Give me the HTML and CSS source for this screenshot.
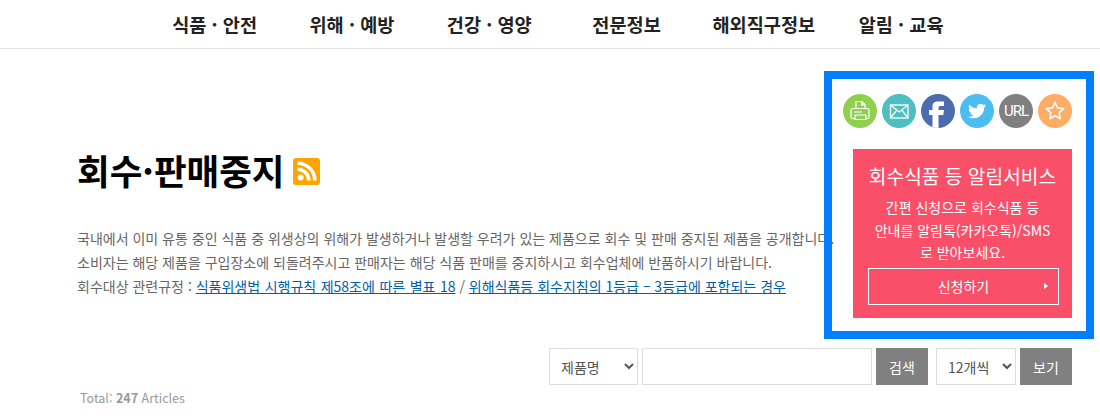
FILE: index.html
```html
<!DOCTYPE html>
<html lang="ko">
<head>
<meta charset="utf-8">
<title>회수·판매중지</title>
<link rel="stylesheet" href="styles.css">
</head>
<body>
<header class="top">
  <nav class="gnb">
    <a>식품 · 안전</a>
    <a>위해 · 예방</a>
    <a>건강 · 영양</a>
    <a>전문정보</a>
    <a>해외직구정보</a>
    <a>알림 · 교육</a>
  </nav>
</header>
<main class="content">
  <h1 class="title">회수·판매중지
    <svg class="rss" viewBox="0 0 27 27" aria-hidden="true">
      <rect width="27" height="27" rx="3" fill="#ffa500"/>
      <circle cx="7.6" cy="19.6" r="3" fill="#fff"/>
      <path d="M4.6 11.2a11.2 11.2 0 0 1 11.2 11.2M4.6 5.2a17.2 17.2 0 0 1 17.2 17.2" fill="none" stroke="#fff" stroke-width="3.6"/>
    </svg>
  </h1>
  <div class="intro">
    <p>국내에서 이미 유통 중인 식품 중 위생상의 위해가 발생하거나 발생할 우려가 있는 제품으로 회수 및 판매 중지된 제품을 공개합니다.</p>
    <p>소비자는 해당 제품을 구입장소에 되돌려주시고 판매자는 해당 식품 판매를 중지하시고 회수업체에 반품하시기 바랍니다.</p>
    <p>회수대상 관련규정 : <a class="lnk lnk-wide">식품위생법 시행규칙 제58조에 따른 별표 18</a> / <a class="lnk">위해식품등 회수지침의 1등급 – 3등급에 포함되는 경우</a></p>
  </div>
  <form class="search">
    <select class="fld sel-a"><option>제품명</option></select>
    <input class="fld txt" type="text">
    <button class="btn btn-search" type="button">검색</button>
    <select class="fld sel-b"><option>12개씩</option></select>
    <button class="btn" type="button">보기</button>
  </form>
  <p class="total">Total: <b>247</b> Articles</p>
</main>
<aside class="panel">
  <div class="shares">
    <span class="ico c-print">
      <svg viewBox="0 0 34 34" aria-hidden="true"><g fill="none" stroke="#fff" stroke-width="1.2"><path d="M13 14.500V7.500h6l3 3v4"/><path fill="#fff" d="M18.500 7.500V11H22"/><path d="M12 24.500H9.500A1.500 1.500 0 0 1 8 23v-6.500a2 2 0 0 1 2-2h14a2 2 0 0 1 2 2V23a1.500 1.500 0 0 1-1.500 1.500H23"/><path d="M12 21h11v4.500H12z"/><path d="M11 18h8"/></g></svg>
    </span>
    <span class="ico c-mail">
      <svg viewBox="0 0 34 34" aria-hidden="true"><g fill="none" stroke="#fff" stroke-width="1.300"><rect x="8.500" y="11" width="17.500" height="13"/><path d="M8.500 11l8.750 7 8.750-7M8.500 24l6-7.500M26 24l-6-7.500"/></g></svg>
    </span>
    <span class="ico c-fb">
      <svg viewBox="0 0 34 34" aria-hidden="true"><path fill="#fff" d="M11.500 34V21H8v-5h3.500v-3.500c0-3.500 2-5 5.500-5h6v4.500h-3c-1.500 0-2.500.5-2.500 2V16H23l-.7 5h-4.800v13z"/></svg>
    </span>
    <span class="ico c-tw">
      <svg viewBox="-10.700 -10.700 45.300 45.300" aria-hidden="true"><path fill="#fff" d="M23.953 4.57a10 10 0 01-2.825.775 4.958 4.958 0 002.163-2.723c-.951.555-2.005.959-3.127 1.184a4.92 4.92 0 00-8.384 4.482C7.69 8.095 4.067 6.13 1.64 3.162a4.822 4.822 0 00-.666 2.475c0 1.71.87 3.213 2.188 4.096a4.904 4.904 0 01-2.228-.616v.06a4.923 4.923 0 003.946 4.827 4.996 4.996 0 01-2.212.085 4.936 4.936 0 004.604 3.417 9.867 9.867 0 01-6.102 2.105c-.39 0-.779-.023-1.17-.067a13.995 13.995 0 007.557 2.209c9.053 0 13.998-7.496 13.998-13.985 0-.21 0-.42-.015-.63A9.935 9.935 0 0024 4.59z"/></svg>
    </span>
    <span class="ico c-url">URL</span>
    <span class="ico c-star">
      <svg viewBox="0 0 34 34" aria-hidden="true"><path fill="none" stroke="#fff" stroke-width="1.700" stroke-linejoin="round" d="M17 8.500l2.600 5.400 5.900.8-4.300 4.100 1.100 5.900-5.300-2.900-5.300 2.900 1.100-5.900-4.300-4.100 5.900-.8z"/></svg>
    </span>
  </div>
  <section class="alert">
    <h2 class="alert-title">회수식품 등 알림서비스</h2>
    <p class="alert-text">간편 신청으로 회수식품 등<br>안내를 알림톡(카카오톡)/SMS<br>로 받아보세요.</p>
    <a class="alert-btn">신청하기<i class="arrow"></i></a>
  </section>
</aside>
</body>
</html>
```
FILE: styles.css
```css
* { box-sizing: border-box; }
html, body { height: 100%; }
body {
  margin: 0;
  overflow: hidden;
  background: #fff;
  font-family: "Noto Sans CJK KR", "Noto Sans", sans-serif;
  color: #666;
}
p, h1, h2 { margin: 0; }

.top {
  height: 49px;
  border-bottom: 1px solid #e8e8e8;
  padding-left: 146px;
}
.gnb {
  display: grid;
  grid-template-columns: repeat(6, 137.3px);
  height: 48px;
}
.gnb a {
  font-size: 18.600px;
  font-weight: 700;
  line-height: 48px;
  text-align: center;
  color: #222;
  white-space: nowrap;
}

.content { padding: 96px 28px 0 77px; }
.title {
  display: flex;
  align-items: center;
  gap: 8px;
  height: 48px;
  font-size: 35.500px;
  font-weight: 700;
  color: #000;
  white-space: nowrap;
}
.rss { width: 27px; height: 27px; margin-top: 4px; }

.intro {
  margin-top: 33px;
  font-size: 14px;
  line-height: 24px;
  color: #666;
  white-space: nowrap;
}
.lnk { color: #0060a8; text-decoration: underline; }
.lnk-wide { word-spacing: 0.6px; }

.search {
  display: flex;
  justify-content: flex-end;
  margin-top: 50px;
  gap: 4px;
  height: 37px;
}
.fld {
  height: 37px;
  border: 1px solid #ddd;
  background: #fff;
  color: #555;
  font: 14px "Noto Sans CJK KR", sans-serif;
  padding: 0 0 0 7px;
  border-radius: 0;
}
.sel-a { width: 89px; }
.txt { width: 230px; }
.sel-b { width: 80px; margin-left: 4px; }
.btn {
  width: 52px;
  height: 37px;
  border: 0;
  padding: 0;
  background: #808080;
  color: #fff;
  font: 14px "Noto Sans CJK KR", sans-serif;
}

.total {
  margin: 3px 0 0 3px;
  font-size: 12.500px;
  line-height: 20px;
  color: #999;
}

.panel {
  position: absolute;
  left: 824px;
  top: 71px;
  width: 270px;
  height: 268px;
  border: 8px solid #0080ff;
  padding: 15px 14px 0 11px;
}
.shares { display: flex; gap: 5px; }
.ico {
  width: 34px;
  height: 34px;
  border-radius: 50%;
  overflow: hidden;
  flex: none;
  display: flex;
  align-items: center;
  justify-content: center;
  color: #fff;
}
.ico svg { width: 34px; height: 34px; display: block; }
.c-print { background: #8fd14f; }
.c-mail { background: #4dbfc2; }
.c-fb { background: #4b6dad; }
.c-tw { background: #4bbdf0; }
.c-url { background: #808080; font: 15px "Roboto", sans-serif; letter-spacing: -1px; }
.c-star { background: #ffac64; }

.alert {
  margin: 21px 0 0 10px;
  width: 219px;
  height: 169px;
  padding-top: 12px;
  background: #f94f68;
  color: #fff;
  text-align: center;
}
.alert-title {
  font-size: 19.200px;
  font-weight: 400;
  line-height: 30px;
  white-space: nowrap;
}
.alert-text {
  margin-top: 5px;
  font-size: 14px;
  line-height: 22.500px;
  white-space: nowrap;
}
.alert-btn {
  position: relative;
  display: block;
  margin: 4px 13px 0 15px;
  height: 37px;
  border: 1px solid #fff;
  font-size: 14px;
  line-height: 35px;
}
.arrow {
  position: absolute;
  right: 10px;
  top: 14px;
  border-left: 4px solid #fff;
  border-top: 3px solid transparent;
  border-bottom: 3px solid transparent;
}
```
